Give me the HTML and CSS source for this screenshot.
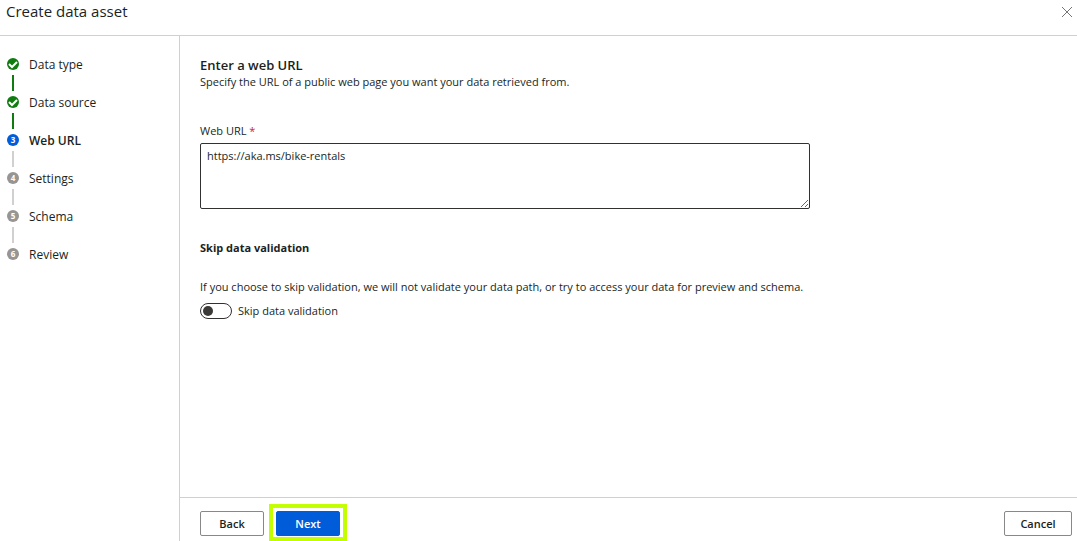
FILE: index.html
```html
<!DOCTYPE html>
<html lang="en">
<head>
<meta charset="utf-8">
<title>Create data asset</title>
<link rel="stylesheet" href="styles.css">
</head>
<body>
<div class="wizard">
  <header class="header">
    <h1 class="title">Create data asset</h1>
    <button class="close" type="button" aria-label="Close">
      <svg width="10" height="10" viewBox="0 0 10 10" fill="none" stroke="#757575" stroke-width="1"><path d="M0 0l10 10M10 0L0 10"/></svg>
    </button>
  </header>
  <div class="body">
    <nav class="sidebar" aria-label="Steps">
      <ol class="steps">
        <li class="step done"><span class="marker"><svg width="12" height="12" viewBox="0 0 12 12" fill="none" stroke="#fff" stroke-width="2"><path d="M2 6l3 3 5-5"/></svg></span><span class="name">Data type</span></li>
        <li class="step done"><span class="marker"><svg width="12" height="12" viewBox="0 0 12 12" fill="none" stroke="#fff" stroke-width="2"><path d="M2 6l3 3 5-5"/></svg></span><span class="name">Data source</span></li>
        <li class="step current" aria-current="step"><span class="marker">3</span><span class="name">Web URL</span></li>
        <li class="step"><span class="marker">4</span><span class="name">Settings</span></li>
        <li class="step"><span class="marker">5</span><span class="name">Schema</span></li>
        <li class="step"><span class="marker">6</span><span class="name">Review</span></li>
      </ol>
    </nav>
    <div class="main">
      <main class="content">
        <h2 class="heading">Enter a web URL</h2>
        <p class="text">Specify the URL of a public web page you want your data retrieved from.</p>
        <label class="label" for="url">Web URL <span class="required">*</span></label>
        <textarea class="url" id="url" required spellcheck="false">https://aka.ms/bike-rentals</textarea>
        <h3 class="subheading">Skip data validation</h3>
        <p class="text">If you choose to skip validation, we will not validate your data path, or try to access your data for preview and schema.</p>
        <div class="toggle">
          <input class="switch" id="skip" type="checkbox" role="switch">
          <label for="skip">Skip data validation</label>
        </div>
      </main>
      <footer class="footer">
        <button class="button" type="button">Back</button>
        <span class="highlight"><button class="button primary" type="button">Next</button></span>
        <button class="button cancel" type="button">Cancel</button>
      </footer>
    </div>
  </div>
</div>
</body>
</html>
```

FILE: styles.css
```css
* {
  box-sizing: border-box;
}

body {
  margin: 0;
  background: #fff;
  color: #201f1e;
  font-family: "Open Sans", "Noto Sans", sans-serif;
  font-size: 11px;
  line-height: 16px;
}

h1, h2, h3, p, ol {
  margin: 0;
  padding: 0;
}

button, textarea {
  font: inherit;
  color: inherit;
}

.wizard {
  display: flex;
  flex-direction: column;
  height: 100vh;
}

.header {
  display: flex;
  justify-content: space-between;
  align-items: flex-start;
  padding: 0 5px 11px 6px;
  border-bottom: 1px solid #d2d0ce;
}

.title {
  font-size: 15px;
  font-weight: 400;
  line-height: 22px;
}

.close {
  display: flex;
  padding: 7px 0;
  border: 0;
  background: none;
}

.body {
  display: flex;
  flex: 1;
  min-height: 0;
}

.sidebar {
  flex: 0 0 180px;
  padding: 19px 7px;
  border-right: 1px solid #d2d0ce;
}

.steps {
  list-style: none;
}

.step {
  display: grid;
  grid-template-columns: 12px 1fr;
  grid-template-rows: 18px 20px;
  column-gap: 10px;
  align-items: center;
  font-size: 12px;
  line-height: 18px;
}

.step:not(:last-child)::after {
  content: "";
  width: 2px;
  height: 16px;
  justify-self: center;
  background: #d2d0ce;
}

.step.done::after {
  background: #107c10;
}

.name {
  padding-top: 2px;
}

.marker {
  display: flex;
  align-items: center;
  justify-content: center;
  height: 12px;
  border-radius: 50%;
  background: #979593;
  color: #fff;
  font-size: 8px;
  font-weight: 700;
  line-height: 12px;
}

.done .marker {
  background: #107c10;
}

.current .marker {
  background: #015cda;
}

.current .name {
  font-weight: 600;
}

.main {
  display: flex;
  flex: 1;
  flex-direction: column;
  min-width: 0;
}

.content {
  flex: 1;
  padding: 20px;
}

.heading {
  font-size: 13px;
  font-weight: 600;
  line-height: 18px;
}

.label {
  display: block;
  margin: 33px 0 4px;
}

.required {
  color: #c4262c;
}

.url {
  display: block;
  width: 610px;
  max-width: 100%;
  height: 66px;
  padding: 4px 6px;
  border: 1px solid #323130;
  border-radius: 2px;
  outline: 0;
}

.subheading {
  margin: 31px 0 23px;
  font-size: 11px;
  font-weight: 700;
}

.toggle {
  display: flex;
  align-items: center;
  gap: 6px;
  margin-top: 8px;
}

.switch {
  display: flex;
  align-items: center;
  width: 32px;
  height: 16px;
  margin: 0;
  padding: 0 2px;
  border: 1px solid #323130;
  border-radius: 8px;
  appearance: none;
}

.switch::before {
  content: "";
  width: 10px;
  height: 10px;
  border-radius: 50%;
  background: #3b3a39;
}

.switch:checked {
  justify-content: flex-end;
}

.footer {
  display: flex;
  align-items: baseline;
  gap: 5px;
  padding: 6px 5px 0 20px;
  border-top: 1px solid #d2d0ce;
}

.button {
  min-width: 64px;
  height: 25px;
  padding: 0 15px;
  border: 1px solid #8a8886;
  border-radius: 2px;
  background: #fff;
  font-weight: 600;
}

.primary {
  border-color: #015cda;
  background: #015cda;
  color: #fff;
}

.highlight {
  display: flex;
  padding: 3px 3px 1px;
  border: 4px solid #c3ff00;
}

.cancel {
  min-width: 68px;
  margin-left: auto;
}
```
